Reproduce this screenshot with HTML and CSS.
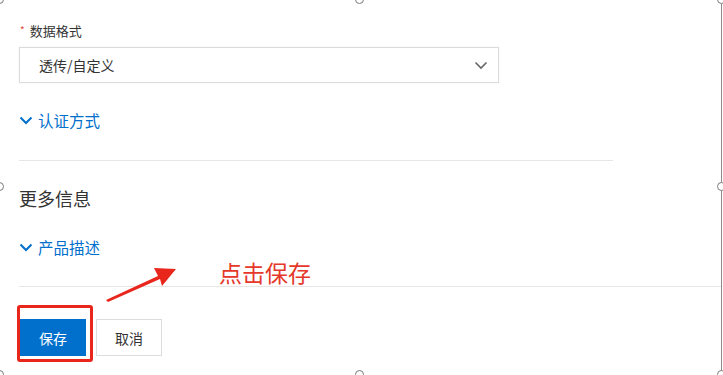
FILE: index.html
```html
<!DOCTYPE html>
<html lang="zh-CN">
<head>
  <meta charset="UTF-8">
  <title>编辑产品</title>
  <link rel="stylesheet" href="styles.css">
</head>
<body>
  <div class="canvas">

    <!-- 表单内容 -->
    <div class="form">
      <div class="field-label"><span class="req">*</span>数据格式</div>
      <div class="select">
        <span>透传/自定义</span>
        <svg class="select-arrow" width="14" height="9" viewBox="0 0 14 9"><path d="M1.5 1.5 L7 7 L12.5 1.5" fill="none" stroke="#666" stroke-width="1.6"/></svg>
      </div>

      <a class="toggle auth">
        <svg width="14" height="9" viewBox="0 0 14 9"><path d="M1.5 1.5 L7 7 L12.5 1.5" fill="none" stroke="#0070cc" stroke-width="2"/></svg>
        认证方式
      </a>

      <div class="divider short"></div>

      <h3 class="section-title">更多信息</h3>

      <a class="toggle desc">
        <svg width="14" height="9" viewBox="0 0 14 9"><path d="M1.5 1.5 L7 7 L12.5 1.5" fill="none" stroke="#0070cc" stroke-width="2"/></svg>
        产品描述
      </a>
    </div>

    <div class="divider long"></div>

    <div class="footer">
      <button class="btn primary">保存</button>
      <button class="btn">取消</button>
    </div>

    <!-- 标注 -->
    <div class="note">点击保存</div>
    <svg class="note-arrow" width="723" height="375" viewBox="0 0 723 375">
      <path d="M106 300 L158 276 L154 268 L176 269 L162 286 L160 279 L108 302 Z" fill="#e8261c"/>
    </svg>
    <div class="mark"></div>

    <!-- 图片选中框 -->
    <div class="frame-line"></div>
    <span class="handle" style="left:0;top:0"></span>
    <span class="handle" style="left:360px;top:0"></span>
    <span class="handle" style="left:722px;top:0"></span>
    <span class="handle" style="left:0;top:187px"></span>
    <span class="handle" style="left:722px;top:187px"></span>
    <span class="handle" style="left:0;top:375px"></span>
    <span class="handle" style="left:360px;top:375px"></span>
    <span class="handle" style="left:722px;top:375px"></span>
  </div>
</body>
</html>
```

FILE: styles.css
```css
/* 页面基础 */
body {
  margin: 0;
  background: #fff;
  font-family: "Noto Sans CJK SC", "Noto Sans", sans-serif;
  color: #333;
}
.canvas {
  position: relative;
  width: 723px;
  height: 375px;
  overflow: hidden;
}
.form {
  padding: 23px 0 0 19px;
}

/* 表单项 */
.field-label {
  font-size: 13px;
  line-height: 16px;
  display: flex;
  align-items: center;
}
.req {
  color: #e5483b;
  font-size: 10px;
  margin: 0 5px 0 1px;
  position: relative;
  top: -1px;
}
.select {
  box-sizing: border-box;
  width: 480px;
  height: 36px;
  margin-top: 8px;
  border: 1px solid #dcdcdc;
  box-shadow: 0 0 2px rgba(0,0,0,0.06);
  padding: 0 10px 0 19px;
  display: flex;
  align-items: center;
  justify-content: space-between;
  font-size: 14px;
  color: #333;
}

/* 折叠链接 */
.toggle {
  display: flex;
  align-items: center;
  gap: 5px;
  color: #0070cc;
  font-size: 15.5px;
  line-height: 20px;
  text-decoration: none;
}
.toggle.auth {
  margin-top: 27px;
}
.toggle.desc {
  margin-top: 27px;
}

.divider {
  height: 1px;
  background: #e6e6e6;
}
.divider.short {
  width: 594px;
  margin-top: 30px;
}
.divider.long {
  margin: 29px 0 0 19px;
  width: 703px;
}

.section-title {
  margin: 25px 0 0;
  font-size: 18px;
  font-weight: normal;
  line-height: 24px;
  color: #333;
}

/* 底部按钮 */
.footer {
  display: flex;
  gap: 10px;
  padding: 32px 0 0 20px;
}
.btn {
  height: 37px;
  width: 66px;
  border: 1px solid #dcdcdc;
  background: #fff;
  color: #333;
  font-family: inherit;
  font-size: 14px;
  padding: 0;
}
.btn.primary {
  background: #0070cc;
  border-color: #0070cc;
  color: #fff;
}

/* 标注 */
.note {
  position: absolute;
  left: 219px;
  top: 257px;
  font-size: 23px;
  line-height: 30px;
  color: #e5382a;
}
.note-arrow {
  position: absolute;
  left: 0;
  top: 0;
}
.mark {
  position: absolute;
  left: 17px;
  top: 305px;
  width: 70px;
  height: 51px;
  border: 3px solid #e8261c;
  border-radius: 3px;
}

/* 选中框 */
.frame-line {
  position: absolute;
  left: 721px;
  top: 0;
  width: 1px;
  height: 375px;
  background: #8a8a8a;
}
.handle {
  position: absolute;
  width: 7px;
  height: 7px;
  margin: -5px 0 0 -5px;
  border: 1.5px solid #7a7a7a;
  border-radius: 50%;
  background: #fff;
}
```
